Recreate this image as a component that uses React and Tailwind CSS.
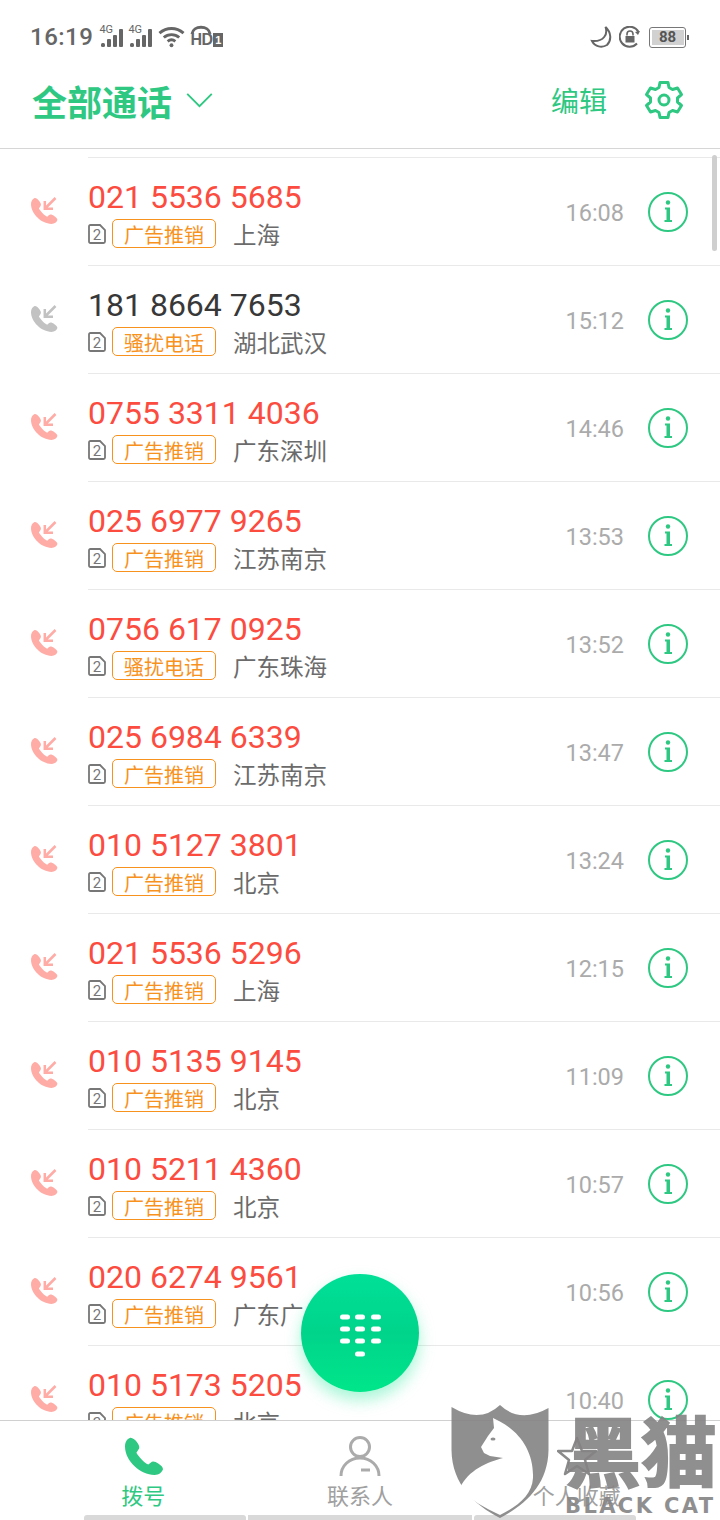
import React from "react";

const rows = [
  ["021 5536 5685", "广告推销", "上海", "16:08", true],
  ["181 8664 7653", "骚扰电话", "湖北武汉", "15:12", false],
  ["0755 3311 4036", "广告推销", "广东深圳", "14:46", true],
  ["025 6977 9265", "广告推销", "江苏南京", "13:53", true],
  ["0756 617 0925", "骚扰电话", "广东珠海", "13:52", true],
  ["025 6984 6339", "广告推销", "江苏南京", "13:47", true],
  ["010 5127 3801", "广告推销", "北京", "13:24", true],
  ["021 5536 5296", "广告推销", "上海", "12:15", true],
  ["010 5135 9145", "广告推销", "北京", "11:09", true],
  ["010 5211 4360", "广告推销", "北京", "10:57", true],
  ["020 6274 9561", "广告推销", "广东广州", "10:56", true],
  ["010 5173 5205", "广告推销", "北京", "10:40", true],
];

const handset =
  "M5 1C2.500 2 0 5 0 10C0 25 16 40 31 40C36 40 39 37 40 34C40 32 38 30 35 28C32 26 29 25 27 27L24.500 29C20 27 14 20 12 16.500L14 13.500C16 11 15 9 13 6C11 3 7 0 5 1Z";

function MissedIcon({ color }) {
  return (
    <svg width="28" height="30" viewBox="0 0 28 30" fill="none">
      <g transform="translate(1 1.500) scale(0.66)">
        <path d={handset} fill={color} />
      </g>
      <path d="M25.500 2L15.500 12M14.800 5V12.800H23" stroke={color} strokeWidth="2.500" />
    </svg>
  );
}

function Sim() {
  return (
    <svg width="18" height="20" viewBox="0 0 18 20" fill="none">
      <path d="M1 2.500Q1 1 2.500 1H12L17 6V17.500Q17 19 15.500 19H2.500Q1 19 1 17.500Z" stroke="#777" strokeWidth="1.800" />
      <text x="9" y="15.500" textAnchor="middle" fontSize="15" fill="#777" fontFamily="Roboto, sans-serif">2</text>
    </svg>
  );
}

function Info() {
  return (
    <svg width="40" height="40" viewBox="0 0 40 40" fill="none">
      <circle cx="20" cy="20" r="19" stroke="#2fc882" strokeWidth="2" />
      <circle cx="20" cy="10.500" r="2.200" fill="#2fc882" />
      <path d="M17 15.500H22V28H24V30H16.500V28H18.500V17.500H17Z" fill="#2fc882" />
    </svg>
  );
}

function Row({ num, tag, loc, time, red }) {
  return (
    <div className="flex h-[108px]">
      <div className="w-[88px] shrink-0 pl-[30px] pt-[39px]">
        <MissedIcon color={red ? "#ffaca6" : "#c2c2c2"} />
      </div>
      <div className="flex flex-1 items-center border-t border-[#e9e9e9] pr-[32px]">
        <div className="flex-1 pt-[3px]">
          <div className={`h-[38px] text-[32px] leading-[38px] [font-family:Roboto,sans-serif] ${red ? "text-[#fb4c3f]" : "text-[#383838]"}`}>
            {num}
          </div>
          <div className="mt-[3px] flex h-[29px] items-center">
            <Sim />
            <div className="ml-[6px] flex h-[29px] w-[104px] items-center justify-center rounded-[5px] border border-[#f8921e] pt-[2px] text-[20px] leading-none text-[#f8921e]">
              {tag}
            </div>
            <div className="ml-[17px] pt-[2px] text-[23.500px] leading-none text-[#6b6b6b]">{loc}</div>
          </div>
        </div>
        <div className="mr-[24px] pt-[4px] text-[23.500px] text-[#ababab] [font-family:Roboto,sans-serif]">{time}</div>
        <Info />
      </div>
    </div>
  );
}

function Signal() {
  return (
    <span className="relative block h-[24px] w-[24px] shrink-0">
      <span className="absolute left-0 top-[-1px] text-[11px] leading-[12px] text-[#666] [font-family:Roboto,sans-serif]">4G</span>
      <svg className="absolute left-0 top-0" width="24" height="24" viewBox="0 0 24 24" fill="#666">
        <rect x="2" y="18" width="4" height="4" rx="1.500" />
        <rect x="8" y="14" width="4" height="8" rx="1" />
        <rect x="14" y="10" width="4" height="12" rx="1" />
        <rect x="20" y="4" width="4" height="18" rx="1" />
      </svg>
    </span>
  );
}

function StatusBar() {
  return (
    <div className="flex h-[74px] items-center pl-[30px] pr-[31px] text-[#666]">
      <span className="text-[24px] font-medium leading-none tracking-[0.5px] [font-family:Roboto,sans-serif]">16:19</span>
      <span className="ml-[6px] flex gap-[5px]">
        <Signal />
        <Signal />
      </span>
      <svg className="ml-[6px]" width="27" height="22" viewBox="0 0 28 22" fill="none" stroke="#666" strokeWidth="3">
        <path d="M1.500 7C9 0.500 19 0.500 26.500 7" />
        <path d="M6 11.500C10.500 7.500 17.500 7.500 22 11.500" />
        <path d="M10 15.500C12.500 13.500 15.500 13.500 18 15.500" />
        <circle cx="14" cy="19.500" r="2" fill="#666" stroke="none" />
      </svg>
      <span className="relative ml-[5px] block h-[24px] w-[33px]">
        <svg className="absolute left-0 top-0" width="24" height="10" viewBox="0 0 24 10" fill="none" stroke="#666" strokeWidth="3">
          <path d="M2 9C3 0 19 0 20 9" />
        </svg>
        <span className="absolute left-0 top-[6px] text-[16px] font-bold leading-[18px] tracking-[-0.5px] text-[#666] [font-family:'Liberation_Sans',sans-serif]">HD</span>
        <span className="absolute right-0 top-[8px] flex h-[14px] w-[10px] items-center justify-center bg-[#666] text-[11px] font-bold leading-none text-white [font-family:'Liberation_Sans',sans-serif]">1</span>
      </span>
      <span className="flex-1" />
      <svg width="22" height="22" viewBox="0 0 22 22" fill="none" stroke="#666" strokeWidth="2">
        <path d="M15.500 1C18 8 14 16 2 15C5 21 12 22 17 19C22 14 21 6 15.500 1Z" fill="#fff" />
      </svg>
      <svg className="ml-[7px]" width="22" height="22" viewBox="0 0 22 22" fill="none" stroke="#666" strokeWidth="2">
        <path d="M18 17.500A10 10 0 1 1 19.500 6" />
        <path d="M21 5L19 9L16 6Z" fill="#666" stroke="none" />
        <path d="M8 9.500V8A3 3 0 0 1 14 8V9.500" strokeWidth="1.600" />
        <rect x="6.500" y="10" width="9" height="6.500" fill="#666" stroke="none" />
      </svg>
      <span className="relative ml-[8px] flex h-[21px] w-[37px] items-center justify-center rounded-[3px] border border-[#777]">
        <span className="flex h-[15px] w-[32px] items-center justify-center bg-[#d1d1d1] text-[15px] font-bold leading-none text-[#555] [font-family:Roboto,sans-serif]">88</span>
      </span>
      <span className="ml-[1px] block h-[5px] w-[2px] bg-[#666]" />
    </div>
  );
}

function Header() {
  return (
    <div className="flex h-[75px] items-center border-b border-[#d6d6d6] pb-[22px] pl-[32px] pr-[36px]">
      <span className="text-[35px] font-bold leading-none text-[#2fc882] [font-family:'Noto_Sans_CJK_SC',sans-serif]">全部通话</span>
      <svg className="ml-[13px]" width="29" height="17" viewBox="0 0 30 18" fill="none" stroke="#2fc882" strokeWidth="2">
        <path d="M2 2L15 15L28 2" />
      </svg>
      <span className="flex-1" />
      <span className="text-[28px] leading-none text-[#2fc882] [font-family:'Noto_Sans_CJK_SC',sans-serif]">编辑</span>
      <svg className="ml-[37px]" width="40" height="40" viewBox="0 0 40 40" fill="none" stroke="#2fc882" strokeWidth="3" strokeLinejoin="round">
        <path d="M16 2.500L24 2.500L25 7.500L28.500 9.500L33.500 8L37.500 14.500L33.500 18L33.500 22L37.500 25.500L33.500 32L28.500 30.500L25 32.500L24 37.500L16 37.500L15 32.500L11.500 30.500L6.500 32L2.500 25.500L6.500 22L6.500 18L2.500 14.500L6.500 8L11.500 9.500L15 7.500Z" />
        <circle cx="20" cy="20" r="5" />
      </svg>
    </div>
  );
}

function Nav() {
  return (
    <div className="grid h-[100px] shrink-0 grid-cols-3 border-t border-[#d0d0d0] bg-white px-[35px]">
      <div className="flex flex-col items-center pt-[15px]">
        <svg className="ml-[2px]" width="38" height="40" viewBox="0 0 40 40"><path d={handset} fill="#2fc882" /></svg>
        <span className="mt-[4px] text-[22px] leading-[28px] text-[#2fc882]">拨号</span>
      </div>
      <div className="flex flex-col items-center pt-[15px]">
        <svg width="42" height="40" viewBox="0 0 42 40" fill="none" stroke="#ababab" strokeWidth="3">
          <circle cx="21" cy="11" r="9.500" />
          <path d="M2 40C2 30 10 22 21 22C32 22 40 30 40 40" />
          <path d="M22 34H31" />
        </svg>
        <span className="mt-[4px] text-[22px] leading-[28px] text-[#a0a0a0]">联系人</span>
      </div>
      <div className="flex flex-col items-center pt-[15px]">
        <svg width="40" height="40" viewBox="0 0 40 40" fill="none" stroke="#8a8a8a" strokeWidth="2.500" strokeLinejoin="round">
          <path d="M20 2L25 15L39 15L28 24L32 38L20 30L8 38L12 24L1 15L15 15Z" />
        </svg>
        <span className="mt-[4px] text-[22px] leading-[28px] text-[#a0a0a0]">个人收藏</span>
      </div>
    </div>
  );
}

function Fab() {
  const xs = [340, 355, 371];
  const ys = [1317, 1329, 1341];
  return (
    <div className="absolute left-[301px] top-[1274px] flex h-[118px] w-[118px] items-center justify-center rounded-full bg-gradient-to-b from-[#00e097] via-[#00d48b] to-[#00e68a] shadow-[0_8px_16px_rgba(0,230,140,0.35)]">
      <svg width="118" height="118" viewBox="301 1274 118 118" fill="#fff">
        {ys.map((y) => xs.map((x) => <rect key={`${x}-${y}`} x={x} y={y - 2.500} width="10" height="5" rx="2.500" />))}
        <rect x="355" y="1351.500" width="10" height="5" rx="2.500" />
      </svg>
    </div>
  );
}

function Watermark() {
  return (
    <div className="pointer-events-none absolute left-[451px] top-[1405px] h-[115px] w-[269px] overflow-hidden opacity-90">
      <svg className="absolute left-0 top-0" width="98" height="115" viewBox="451 1405 98 115">
        <path d="M451.500 1407Q480 1424 500 1405Q520 1424 548.500 1408V1450C548 1485 525 1505 500 1518C475 1505 452 1485 451.500 1450Z" fill="#858384" />
        <path d="M493 1418L499 1421C520 1432 534 1452 533 1478C532 1495 518 1506 500 1515C485 1508 470 1500 460 1488C468 1470 488 1462 503 1458L490 1456L484 1453L481 1447L488 1436L494 1428Z" fill="#fff" />
        <ellipse cx="493" cy="1439" rx="2.500" ry="1.500" fill="#858384" />
      </svg>
      <div className="absolute left-[114px] top-[-3px] whitespace-nowrap text-[76px] font-bold leading-[92px] text-[#858384] [-webkit-text-stroke:2px_#858384] [font-family:'Noto_Sans_CJK_SC',sans-serif]">黑猫</div>
      <div className="absolute left-[114px] top-[88px] whitespace-nowrap text-[21px] font-bold leading-[26px] tracking-[2.400px] text-[#858384] [font-family:'DejaVu_Sans',sans-serif]">BLACK CAT</div>
    </div>
  );
}

export default function App() {
  return (
    <div className="relative flex h-[1520px] w-[720px] flex-col overflow-hidden bg-white [font-family:'Noto_Sans_CJK_SC',sans-serif]">
      <StatusBar />
      <Header />
      <div className="relative min-h-0 flex-1 overflow-hidden pt-[8px]">
        {rows.map((r) => (
          <Row key={r[0]} num={r[0]} tag={r[1]} loc={r[2]} time={r[3]} red={r[4]} />
        ))}
        <div className="absolute left-[712px] top-[6px] h-[96px] w-[5px] rounded-full bg-[#cfcfcf]" />
      </div>
      <Nav />
      <Fab />
      <div className="absolute bottom-0 left-[84px] flex h-[5px] gap-[2px]">
        <div className="w-[162px] rounded-t-[3px] bg-[#d9d9d9]" />
        <div className="w-[224px] bg-[#d9d9d9]" />
        <div className="w-[162px] rounded-t-[3px] bg-[#d9d9d9]" />
      </div>
      <Watermark />
    </div>
  );
}
